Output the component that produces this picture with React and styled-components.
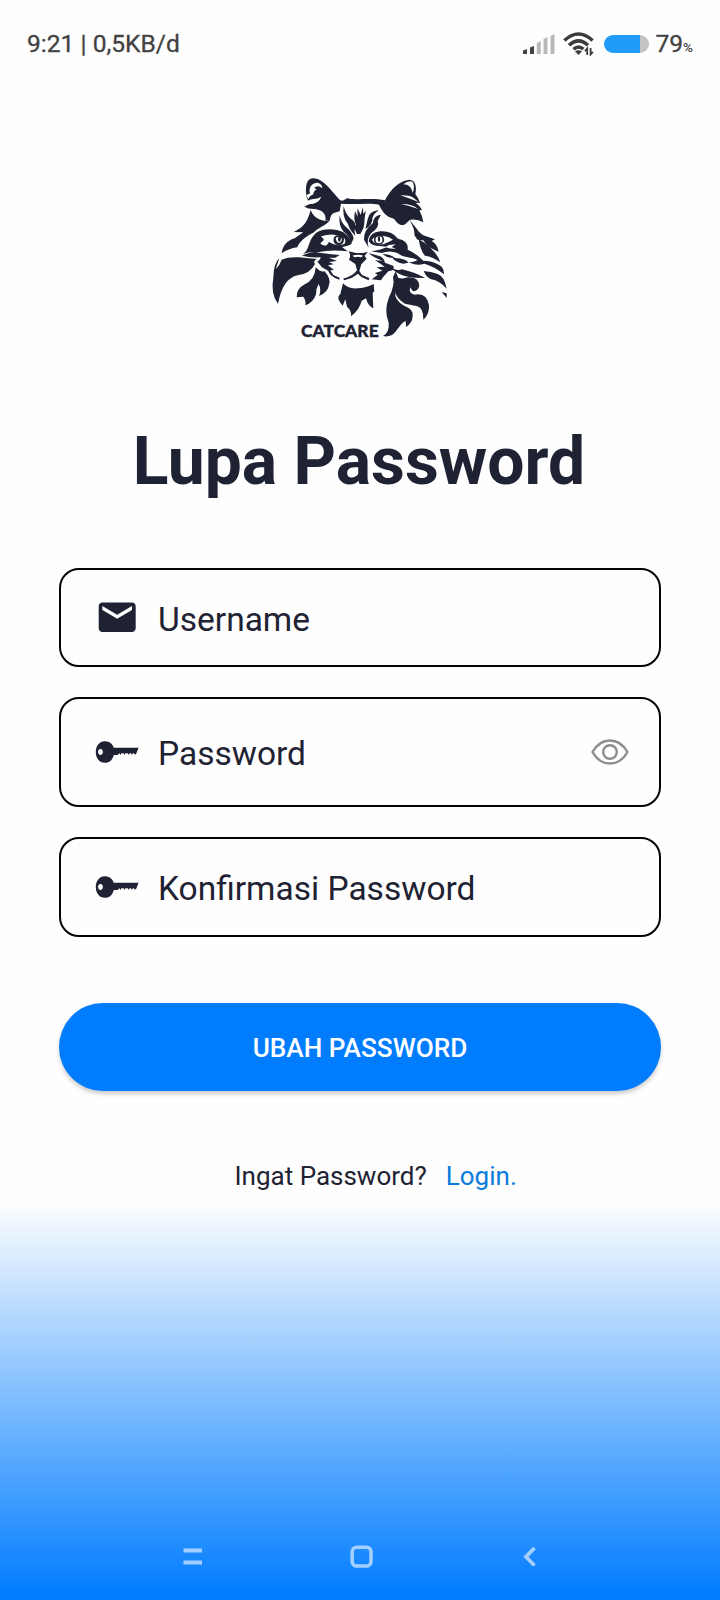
import React from "react";
import styled, { createGlobalStyle } from "styled-components";

const INK = "#1e2233";

const GlobalStyle = createGlobalStyle`
  *, *::before, *::after { box-sizing: border-box; }
  body { margin: 0; background: #fefefe; font-family: Roboto, "Noto Sans", sans-serif; }
`;

const Screen = styled.div`
  width: 720px;
  height: 1600px;
  display: flex;
  flex-direction: column;
  overflow: hidden;
  color: ${INK};
  background: linear-gradient(to bottom, #fefefe 0, #fefefe 1201px, #007cff 1596px);
`;

const StatusBar = styled.header`
  display: flex;
  align-items: center;
  justify-content: space-between;
  height: 88px;
  padding: 0 27px 0 27px;
  color: #424242;
`;

const StatusText = styled.span`
  font-size: 24.6px;
  line-height: 28px;
  -webkit-text-stroke: 0.3px #424242;
`;

const StatusIcons = styled.div`
  display: flex;
  align-items: center;
`;

const Battery = styled.div`
  width: 45px;
  height: 18px;
  margin: 0 6px 0 9px;
  border-radius: 9px;
  background: linear-gradient(to right, #219bfa 36px, #c3c3c3 36px);
`;

const Percent = styled.span`
  font-size: 13.5px;
  font-weight: 500;
  padding-top: 6px;
`;

const Content = styled.main`
  flex: 1;
  display: flex;
  flex-direction: column;
  align-items: stretch;
  padding: 82px 59px 0;
`;

const LogoWrap = styled.div`
  display: flex;
  padding-left: 201px;
  height: 175px;
`;

const Title = styled.h1`
  margin: 77px 2px 0 0;
  font-size: 66px;
  line-height: 80px;
  font-weight: 700;
  text-align: center;
  white-space: nowrap;
`;

const Fields = styled.div`
  display: flex;
  flex-direction: column;
  gap: 30px;
  margin-top: 66px;
`;

const Field = styled.label`
  display: flex;
  align-items: center;
  height: ${(p) => p.$height}px;
  padding: 0 30px 0 33px;
  border: 2px solid #050507;
  border-radius: 20px;
`;

const IconSlot = styled.span`
  display: flex;
  justify-content: center;
  width: 46px;
  margin-right: 18px;
`;

const FieldText = styled.span`
  flex: 1;
  font-size: 33.5px;
  line-height: 40px;
  padding-top: ${(p) => p.$drop || 3}px;
`;

const SubmitButton = styled.button`
  height: 88px;
  margin-top: 66px;
  padding: 1px 0 0;
  border: 0;
  border-radius: 44px;
  background: #007cff;
  color: #fff;
  font-family: inherit;
  font-size: 26.2px;
  font-weight: 500;
  box-shadow: 0 3px 4px rgba(0, 0, 0, 0.2);
`;

const Prompt = styled.p`
  display: flex;
  gap: 19px;
  margin: 70px 0 0;
  padding-left: 175.5px;
  font-size: 26px;
  line-height: 30px;
  white-space: nowrap;
`;

const LoginLink = styled.a`
  color: #087bdc;
`;

const NavBar = styled.nav`
  display: flex;
  align-items: center;
  justify-content: space-between;
  height: 86px;
  padding: 0 182px 0 180px;
`;

function Signal() {
  return (
    <svg width="33" height="22" viewBox="0 0 33 22">
      <path fill="#424242" d="M1 17.5l4-1.5v5H1zM8 14.5l4-1.5v8H8z" />
      <path fill="#b8b8b8" d="M14.8 10l4-2v13h-4zM21.5 6l4-2v17h-4zM28.5 3l4-2v20h-4z" />
    </svg>
  );
}

const WifiSvg = styled.svg`
  margin-left: 8px;
  fill: none;
  stroke: #3c3c3c;
`;

function Wifi() {
  return (
    <WifiSvg width="32" height="24" viewBox="0 0 32 24">
      <path strokeWidth="3.5" d="M1.4 8.5Q15.5-4.5 29.6 8.5M6 13.2Q15.5 4.5 25 13.2M10.5 17.2Q15.5 12.8 20.5 17" />
      <path fill="#3c3c3c" stroke="none" d="M12 19.3q3.5-2 7 0l-3.5 3.8z" />
      <path strokeWidth="1.8" d="M24.2 23v-6.5l-2.2 2.6M27.6 16v6.4l2.3-2.6" />
    </WifiSvg>
  );
}

function MailIcon() {
  return (
    <svg width="44.4" height="44.4" viewBox="0 0 24 24" fill={INK}>
      <path d="M20 4H4c-1.1 0-2 .9-2 2v12c0 1.1.9 2 2 2h16c1.1 0 2-.9 2-2V6c0-1.1-.9-2-2-2zm0 4.1l-8 4.8-8-4.8V5.9l8 4.8 8-4.8z" />
    </svg>
  );
}

function KeyIcon() {
  return (
    <svg width="44" height="24" viewBox="0 0 44 24" fill={INK}>
      <path
        fillRule="evenodd"
        d="M10 1.2C15 1.2 17.6 4.2 18.8 7.7H43.6L41 14.2H39.6L38.8 13.2H37.8L37 15 36 13.2H34.6L33.8 15 32.8 13.2H30.4L29.6 15 28.6 13.2H26.4L25.6 15 24.6 13.2L22.4 15H18.8C17.5 20 14.5 22.8 10 22.8C4 22.8.8 17.8.8 12S4 1.2 10 1.2ZM5.5 9.1C4 9.1 3.1 10.3 3.1 12S4 14.9 5.5 14.9 7.8 13.7 7.8 12 7 9.1 5.5 9.1Z"
      />
    </svg>
  );
}

function EyeIcon() {
  return (
    <svg width="38" height="26" viewBox="0 0 38 26" fill="none" stroke="#8b8d92" strokeWidth="2.4">
      <path d="M1.5 13Q8 1.5 19 1.5T36.5 13Q30 24.5 19 24.5T1.5 13Z" />
      <circle cx="19" cy="13" r="6.8" />
    </svg>
  );
}

function CatLogo() {
  return (
    <svg width="195" height="175" viewBox="0 0 585 525" fill={INK}>
      {/* ears and crown */}
      <path d="M140 82C134 50 140 25 158 25C190 24 216 66 240 90C250 97 256 85 264 85C280 92 340 82 375 91C390 58 420 31 448 29C466 30 471 50 466 72Q476 84 480 99L467 98Q482 110 486 120L478 121Q487 137 490 157Q474 147 452 149C441 153 437 169 421 164C408 160 408 146 393 143C376 137 366 123 357 104C325 98 285 105 243 101L239 124C225 128 211 128 210 151L196 152C200 135 190 121 166 117Q145 118 133 110L148 101Z" />
      <g fill="#fefefe">
        <path d="M150 70C145 52 156 38 174 38Q187 43 187 55Q175 43 162 53L170 58Q160 64 160 73Q148 78 145 88L139 76Z" />
        <path d="M132 106Q145 85 163 87Q176 86 184 80Q176 102 148 103Z" />
        <path d="M430 43Q447 30 458 36Q466 50 458 69Q454 43 430 43Z" />
        <path d="M421 76Q447 75 460 83L476 96Q447 85 421 76ZM423 102Q456 101 474 117Q447 106 423 102Z" />
      </g>

      {/* cheek tufts under the ears */}
      <path d="M152 120C158 136 170 149 196 153L210 151C200 166 175 173 162 187C140 199 119 212 112 232Q85 236 65 250C68 228 79 213 104 205L130 187L101 186C126 173 140 164 152 120Z" />
      <path d="M449 150L470 176Q480 192 496 198L525 208L515 213Q531 221 536 245C512 236 500 228 490 211Q468 211 469 203Q463 200 463 192Q465 180 449 150Z" />
      <path d="M476 208Q505 224 518 241Q534 256 541 277Q519 260 495 257Q482 245 476 208Z" />

      {/* forehead markings */}
      <path d="M285 123L293 140L292 115L302 134L309 111L310 131L319 122C311 140 316 163 309 177L301 192L291 192L282 173L288 164Q280 153 285 123Z" />
      <path d="M251 108Q256 132 272 146Q288 156 287 172Q281 177 286 197Q268 180 264 162Q246 142 251 108Z" />
      <path d="M239 135Q242 154 254 167Q278 186 281 205L273 223Q269 197 251 185Q235 168 239 135Z" />
      <path d="M357 121Q327 122 323 148L316 177Q339 162 337 146Q339 132 357 121Z" />
      <path d="M363 134Q340 136 339 159Q310 181 312 209L326 233Q318 209 333 190Q361 171 353 153Z" />

      {/* eyes */}
      <path d="M126 253C150 244 142 211 168 189C191 173 228 176 250 187Q271 201 274 223Q257 231 246 231L263 244Q213 238 177 246Q147 244 126 253Z" />
      <path d="M326 213Q329 187 361 184Q395 182 414 206Q446 211 443 239Q468 249 491 274C459 260 434 266 412 249Q390 240 365 249L333 244Q364 239 382 230L350 227Q333 226 326 213Z" />
      <g fill="#fefefe">
        <path d="M183 199Q220 187 248 201Q260 208 254 221Q230 232 207 216L200 226Q187 229 181 220L192 209Z" />
        <path d="M336 209Q346 194 372 198Q388 200 399 209Q384 217 370 223Q344 226 336 209Z" />
        <path d="M387 225L407 223L395 231L408 237Q390 237 376 232Z" />
      </g>
      <path d="M221 204Q218 221 234 226Q252 225 252 207Q253 197 239 195Q225 194 221 204ZM227 205Q230 198 240 201Q249 206 243 216Q231 225 227 205Z" fillRule="evenodd" />
      <path d="M239 196Q247 207 238 217Q229 207 239 196Z" />
      <circle cx="357" cy="209" r="13" fill="none" stroke={INK} strokeWidth="5" />
      <ellipse cx="357" cy="207" rx="3.5" ry="9" />

      {/* muzzle */}
      <path d="M266 244L288 249H309L324 245L314 257L320 266L304 283L298 303L306 315L328 324L326 331L304 321L294 311L276 323L253 331L249 326Q278 320 291 301L286 282L267 269Q274 257 266 244Z" />
      <path d="M277 257Q294 252 310 257L303 262Q294 259 284 262Z" fill="#fefefe" />
      <path d="M181 260L207 252L239 255L226 263L207 263L231 273L207 276L221 283L204 286L222 300L211 301L220 315L239 323L238 329Q213 322 204 302Q184 293 181 286L172 275Q184 266 181 260Z" />
      <path d="M326 249L355 257Q371 260 375 278L401 288L400 300L385 304Q378 312 369 322L363 331L335 328L353 315L345 309L367 302L350 292L374 290L359 280L345 271L368 272Q341 263 326 249Z" />
      <path d="M368 252Q391 252 405 264Q438 266 445 278L431 281Q406 277 397 263Q380 264 368 252Z" />

      {/* flowing fur */}
      <path d="M65 269Q85 260 116 262L170 267Q158 274 165 282Q151 311 113 316Q68 325 54 402Q31 371 40 324Q41 279 58 265L47 298Q59 286 65 269Z" />
      <path d="M126 257Q158 242 178 248L210 252Q179 270 126 257Z" />
      <path d="M167 292Q181 307 194 304Q214 327 207 344Q205 366 177 378Q185 359 176 342Q167 357 168 373Q160 398 136 406Q139 394 130 380L110 382Q109 356 132 344Q165 331 167 292Z" />
      <path d="M391 288Q405 304 426 298Q465 307 495 324Q441 325 420 313Q399 303 391 288Z" />
      <path d="M412 266Q447 285 473 270Q451 262 438 250Q465 252 488 272Q518 273 533 283Q553 291 552 313Q526 291 494 281Q470 288 452 279Z" />
      <path d="M491 303Q514 305 531 311Q553 317 560 356Q538 332 514 328Q498 321 491 303ZM545 366L560 370V384Z" />
      <path d="M407 304L415 324Q430 327 444 322Q476 321 478 347Q475 362 460 364Q454 360 451 352Q444 369 463 374Q500 366 507 405Q509 433 490 449Q491 414 472 409L435 401Q410 387 406 367Q402 390 432 407Q462 417 458 439Q457 460 438 471Q438 459 436 452Q422 461 412 478Q397 504 369 498Q389 487 386 458Q371 422 387 382Q405 347 399 321Z" />

      {/* chin */}
      <path d="M249 340Q263 357 292 355Q319 354 341 342L343 364L338 369L340 415Q324 408 318 385L305 392Q298 420 273 439Q275 421 261 410L256 388L248 407Q226 382 241 372Z" />
      <text x="123" y="500" textLength="233" lengthAdjust="spacingAndGlyphs" fontFamily="Lato, sans-serif" fontWeight="900" fontSize="52" stroke={INK} strokeWidth="1">CATCARE</text>
    </svg>
  );
}

function NavIcon({ children, width = 24 }) {
  return (
    <svg width={width} height="28" viewBox={`0 0 ${width} 28`} fill="none" stroke="#a3cfff" strokeWidth="3.8">
      {children}
    </svg>
  );
}

export default function App() {
  return (
    <>
      <GlobalStyle />
      <Screen>
        <StatusBar>
          <StatusText>9:21 | 0,5KB/d</StatusText>
          <StatusIcons>
            <Signal />
            <Wifi />
            <Battery />
            <StatusText>79</StatusText>
            <Percent>%</Percent>
          </StatusIcons>
        </StatusBar>
        <Content>
          <LogoWrap>
            <CatLogo />
          </LogoWrap>
          <Title>Lupa Password</Title>
          <Fields>
            <Field $height={99}>
              <IconSlot><MailIcon /></IconSlot>
              <FieldText $drop={4}>Username</FieldText>
            </Field>
            <Field $height={110}>
              <IconSlot><KeyIcon /></IconSlot>
              <FieldText>Password</FieldText>
              <EyeIcon />
            </Field>
            <Field $height={100}>
              <IconSlot><KeyIcon /></IconSlot>
              <FieldText $drop={4}>Konfirmasi Password</FieldText>
            </Field>
          </Fields>
          <SubmitButton>UBAH PASSWORD</SubmitButton>
          <Prompt>
            Ingat Password? <LoginLink>Login.</LoginLink>
          </Prompt>
        </Content>
        <NavBar>
          <NavIcon>
            <path d="M3.5 7.5H22M3.5 19.5H22" />
          </NavIcon>
          <NavIcon width={26}>
            <rect x="2.2" y="4.2" width="18.8" height="18.8" rx="4.5" strokeWidth="3.6" />
          </NavIcon>
          <NavIcon width={16}>
            <path d="M12.5 5L4 13.7L12.5 22.5" />
          </NavIcon>
        </NavBar>
      </Screen>
    </>
  );
}
